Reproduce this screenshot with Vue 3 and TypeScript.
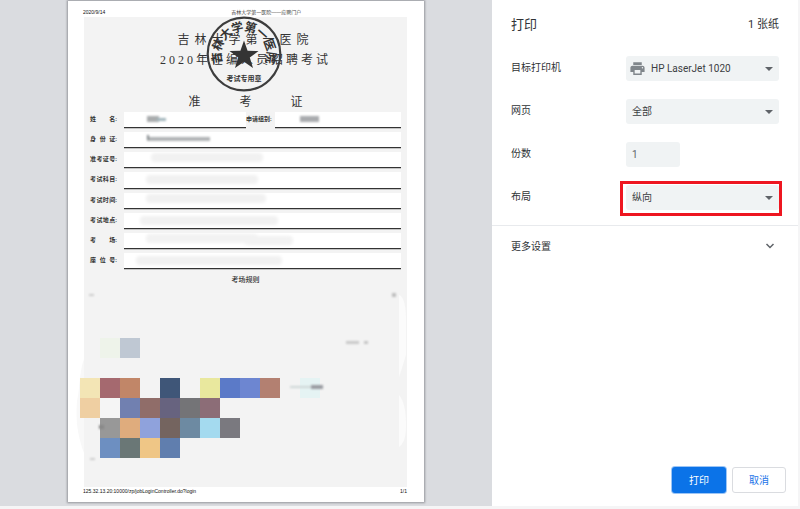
<script setup lang="ts">
import { ref } from 'vue'

interface Row { label: string[] }
interface Block { x: number; y: number; c: string }
interface Smudge { x: number; y: number; w: number; h: number; c: string }

const printer = ref('HP LaserJet 1020')
const pages = ref('全部')
const copies = ref('1')
const layout = ref('纵向')

const rows: Row[] = [
  { label: ['身', '份', '证:'] },
  { label: ['准', '考', '证', '号:'] },
  { label: ['考', '试', '科', '目:'] },
  { label: ['考', '试', '时', '间:'] },
  { label: ['考', '试', '地', '点:'] },
  { label: ['考', '场:'] },
  { label: ['座', '位', '号:'] },
]

const sealChars = Array.from('吉林大学第一医院').map((ch, i) => ({ ch, angle: -98 + i * 28 }))

const blocks: Block[] = [
  { x: 32, y: 337, c: '#eef3ea' }, { x: 52, y: 337, c: '#bfc8d3' },
  { x: 12, y: 377, c: '#f3e5b5' }, { x: 32, y: 377, c: '#a5696f' }, { x: 52, y: 377, c: '#c18668' },
  { x: 92, y: 377, c: '#3f5678' }, { x: 132, y: 377, c: '#e9e89e' }, { x: 152, y: 377, c: '#5b7ac8' },
  { x: 172, y: 377, c: '#6d86d1' }, { x: 192, y: 377, c: '#b38071' }, { x: 232, y: 377, c: '#e5f3f3' },
  { x: 12, y: 397, c: '#efcfa2' }, { x: 52, y: 397, c: '#7180b0' }, { x: 72, y: 397, c: '#906d69' },
  { x: 92, y: 397, c: '#67637f' }, { x: 112, y: 397, c: '#747477' }, { x: 132, y: 397, c: '#8c6d77' },
  { x: 32, y: 417, c: '#989898' }, { x: 52, y: 417, c: '#dfac7d' }, { x: 72, y: 417, c: '#8fa2dc' },
  { x: 92, y: 417, c: '#74645f' }, { x: 112, y: 417, c: '#6d8aa2' }, { x: 132, y: 417, c: '#a4daef' },
  { x: 152, y: 417, c: '#7a797f' },
  { x: 32, y: 437, c: '#6d8fc1' }, { x: 52, y: 437, c: '#6a7776' }, { x: 72, y: 437, c: '#efc686' },
  { x: 92, y: 437, c: '#607eae' },
]

const smudges: Smudge[] = [
  { x: 83, y: 152, w: 112, h: 9, c: '#f1f1f1' },
  { x: 78, y: 174, w: 112, h: 9, c: '#f1f1f1' },
  { x: 78, y: 193, w: 120, h: 9, c: '#f1f1f1' },
  { x: 72, y: 215, w: 138, h: 9, c: '#f1f1f1' },
  { x: 78, y: 233, w: 112, h: 9, c: '#f2f2f2' },
  { x: 176, y: 235, w: 49, h: 9, c: '#f2f2f2' },
  { x: 68, y: 255, w: 146, h: 9, c: '#f1f1f1' },
]

const inkMarks: Smudge[] = [
  { x: 79, y: 115, w: 12, h: 6, c: '#a9acad' },
  { x: 89, y: 117, w: 9, h: 3, c: '#a3b6bc' },
  { x: 232, y: 115, w: 19, h: 6, c: '#a9abae' },
  { x: 79, y: 136, w: 63, h: 4, c: '#b0b3b5' },
  { x: 79, y: 134, w: 2, h: 5, c: '#83898c' },
  { x: 21, y: 293, w: 5, h: 2, c: '#cccccc' },
  { x: 324, y: 292, w: 4, h: 4, c: '#bdbdbd' },
  { x: 278, y: 340, w: 13, h: 3, c: '#c9c9c9' },
  { x: 296, y: 340, w: 4, h: 3, c: '#c4c4c4' },
  { x: 222, y: 385, w: 30, h: 2, c: '#cdd6d6' },
  { x: 243, y: 384, w: 12, h: 4, c: '#9a9ba2' },
  { x: 31, y: 424, w: 5, h: 4, c: '#888888' },
  { x: 22, y: 457, w: 5, h: 2, c: '#cccccc' },
]
</script>

<template>
  <div class="dialog">
    <main class="preview">
      <article class="paper">
        <header class="paper-head">
          <span>2020/9/14</span>
          <span class="doc-title">吉林大学第一医院——应聘门户</span>
        </header>
        <section class="sheet">
          <h1>吉林大学第一医院</h1>
          <h2>2020年在编人员招聘考试</h2>
          <h3><span>准</span><span>考</span><span>证</span></h3>
          <div class="form">
            <div class="row">
              <div class="label"><span>姓</span><span>名:</span></div>
              <div class="line short"></div>
              <div class="group">申请组别:</div>
              <div class="line"></div>
            </div>
            <div v-for="(row, i) in rows" :key="i" class="row">
              <div class="label"><span v-for="(c, j) in row.label" :key="j">{{ c }}</span></div>
              <div class="line"></div>
            </div>
          </div>
          <h4>考场规则</h4>
        </section>
        <footer class="paper-foot">
          <span>125.32.13.20:10000/zp/jobLoginController.do?login</span>
          <span>1/1</span>
        </footer>
        <svg class="overlay" viewBox="0 0 356 501" aria-hidden="true">
          <defs>
            <filter id="soft"><feGaussianBlur stdDeviation="1.5" /></filter>
            <filter id="ink"><feGaussianBlur stdDeviation="0.9" /></filter>
          </defs>
          <g filter="url(#soft)">
            <rect v-for="(s, i) in smudges" :key="i" :x="s.x" :y="s.y" :width="s.w" :height="s.h" rx="4" :fill="s.c" />
          </g>
          <path d="M331 294C336 296 338 305 338 320V354L333 370L331 376Z" fill="#fbfbfb" />
          <path d="M331 394C336 400 338 410 338 425C338 437 335 443 331 446Z" fill="#fbfbfb" />
          <path d="M16 358C11 372 12 388 9 400C7 426 12 440 16 452Z" fill="#f8f8f8" />
          <rect x="32" y="397" width="20" height="20" fill="#f5f5f5" />
          <rect v-for="(b, i) in blocks" :key="i" :x="b.x" :y="b.y" width="20" height="20" :fill="b.c" />
          <g filter="url(#ink)">
            <rect v-for="(s, i) in inkMarks" :key="i" :x="s.x" :y="s.y" :width="s.w" :height="s.h" :fill="s.c" />
          </g>
          <g transform="translate(176 53)" fill="#343434">
            <circle r="36.3" fill="none" stroke="#3d3d3d" stroke-width="2.2" />
            <path d="M0-13.5L3.6-3.3L14.5-3L5.8 3.6L9 14L0 7.7L-9 14L-5.8 3.6L-14.5-3L-3.6-3.3Z" />
            <text v-for="s in sealChars" :key="s.angle" class="seal" :transform="`rotate(${s.angle})`" y="-23">{{ s.ch }}</text>
            <text class="seal-name" y="27">考试专用章</text>
          </g>
        </svg>
      </article>
    </main>

    <aside class="panel">
      <div class="panel-head">
        <span class="title">打印</span>
        <span class="sheets">1 张纸</span>
      </div>
      <div class="settings">
        <div class="setting">
          <label for="printer">目标打印机</label>
          <div class="control">
            <svg class="printer" viewBox="0 0 24 24"><path d="M19 8H5c-1.66 0-3 1.34-3 3v6h4v4h12v-4h4v-6c0-1.66-1.34-3-3-3zm-3 11H8v-5h8v5zm3-7c-.55 0-1-.45-1-1s.45-1 1-1 1 .45 1 1-.45 1-1 1zm-1-9H6v4h12V3z" /></svg>
            <select id="printer" v-model="printer" class="with-icon"><option>HP LaserJet 1020</option></select>
            <svg class="arrow" viewBox="0 0 8 4"><path d="M0 0H8L4 4Z" /></svg>
          </div>
        </div>
        <div class="setting">
          <label for="pages">网页</label>
          <div class="control">
            <select id="pages" v-model="pages"><option>全部</option></select>
            <svg class="arrow" viewBox="0 0 8 4"><path d="M0 0H8L4 4Z" /></svg>
          </div>
        </div>
        <div class="setting">
          <label for="copies">份数</label>
          <div class="control"><input id="copies" v-model="copies" type="text" inputmode="numeric"></div>
        </div>
        <div class="setting">
          <label for="layout">布局</label>
          <div class="control marked">
            <select id="layout" v-model="layout"><option>纵向</option></select>
            <svg class="arrow" viewBox="0 0 8 4"><path d="M0 0H8L4 4Z" /></svg>
          </div>
        </div>
      </div>
      <button class="more" type="button">
        <span>更多设置</span>
        <svg viewBox="0 0 10 10"><path d="M1.5 3L5 6.5L8.5 3" /></svg>
      </button>
      <div class="actions">
        <button class="primary" type="button">打印</button>
        <button class="secondary" type="button">取消</button>
      </div>
    </aside>
  </div>
</template>

<style>
body { margin: 0; background: #f5f5f5; }
</style>

<style scoped>
* { box-sizing: border-box; }
.dialog {
  display: flex;
  height: 100vh;
  padding: 0 2px 3px 0;
  background: #f5f5f6;
  font-family: Roboto, "Noto Sans CJK SC", sans-serif;
  font-size: 10px;
  color: #303336;
}
.preview {
  flex: 1;
  display: flex;
  justify-content: center;
  padding: 1px 0 4px;
  background: #dadce0;
}
.paper {
  position: relative;
  display: flex;
  flex-direction: column;
  width: 356px;
  background: #fff;
  box-shadow: 0 0 2px 1px #96989d;
}
.paper-head, .paper-foot {
  display: flex;
  padding: 0 17px 0 15px;
  font: 5px/8px "Liberation Sans", "Noto Sans CJK SC", sans-serif;
  color: #111;
}
.paper-head { height: 16px; padding-top: 7px; }
.paper-foot { height: 15px; justify-content: space-between; }
.doc-title { margin-left: 126px; color: #444; }
.sheet {
  flex: 1;
  margin: 0 17px 0 16px;
  padding: 13px 6px 0;
  background: #f3f3f3;
  color: #333;
}
h1, h2, h3, h4 { margin: 0; font-weight: 400; text-align: center; white-space: nowrap; }
h1 { font-size: 12px; line-height: 20px; letter-spacing: 5px; font-family: "Liberation Serif", "Noto Sans CJK SC", serif; }
h2 { font-size: 12px; line-height: 20px; letter-spacing: 3px; font-family: "Liberation Serif", "Noto Sans CJK SC", serif; }
h3 { display: flex; justify-content: center; gap: 39px; margin-top: 26px; font-size: 12px; line-height: 12px; }
h4 { margin-top: 6px; font-size: 7px; line-height: 10px; font-weight: 500; }
.form { display: grid; grid-template-rows: repeat(8, 1fr); height: 161px; }
.row { display: flex; padding-top: 4px; font-size: 6px; line-height: 14px; font-weight: 700; }
.label { display: flex; justify-content: space-between; width: 27px; margin-right: 7px; }
.line { flex: 1; background: #fff; border-bottom: 1px solid #333; box-shadow: 0 1px 0 #c4c4c4; }
.line.short { flex: none; width: 122px; }
.group { width: 29px; }
.overlay { position: absolute; inset: 0; width: 356px; height: 501px; }
.seal { font: 700 12px/1 "Noto Sans CJK SC", sans-serif; text-anchor: middle; }
.seal-name { font: 700 7px/1 "Noto Sans CJK SC", sans-serif; text-anchor: middle; }

.panel { display: flex; flex-direction: column; width: 306px; background: #fff; }
.panel-head {
  display: flex;
  align-items: center;
  justify-content: space-between;
  height: 46px;
  padding: 0 19px;
}
.title { font-size: 13px; }
.sheets { font-size: 11px; }
.settings {
  display: grid;
  gap: 18px;
  padding: 10px 19px 15px;
  border-bottom: 1px solid #e8eaed;
}
.setting { display: flex; height: 25px; }
.setting label { width: 115px; line-height: 23px; }
.control { position: relative; flex: 1; height: 25px; }
select, input {
  display: block;
  width: 100%;
  height: 25px;
  margin: 0;
  padding: 0 6px;
  border: 0;
  border-radius: 3px;
  appearance: none;
  background: #f0f3f4;
  color: #3c4043;
  font: inherit;
}
select.with-icon { padding-left: 25px; }
input { width: 54px; color: #5f6368; }
.printer { position: absolute; left: 3px; top: 4px; width: 17px; height: 17px; fill: #80868b; }
.arrow { position: absolute; right: 6px; top: 11px; width: 8px; height: 4px; fill: #5f6368; }
.marked::after { content: ""; position: absolute; inset: -4px -3px -6px -6px; border: 3px solid #ee1620; pointer-events: none; }
.more {
  display: flex;
  align-items: center;
  justify-content: space-between;
  height: 39px;
  padding: 0 23px 0 19px;
  border: 0;
  background: none;
  color: inherit;
  font: inherit;
}
.more svg { width: 10px; height: 10px; fill: none; stroke: #5f6368; stroke-width: 1.5; }
.actions { display: flex; justify-content: flex-end; gap: 6px; margin-top: auto; padding: 0 12px 13px; }
.actions button { width: 54px; height: 26px; padding: 0 0 2px; border-radius: 3px; font: inherit; }
.actions .primary { border: 0; background: #0b73e8; color: #fff; box-shadow: 0 0 0 1px #9cc5f5; }
.actions .secondary { border: 1px solid #dadce0; background: #fff; color: #1a73e8; }
</style>
